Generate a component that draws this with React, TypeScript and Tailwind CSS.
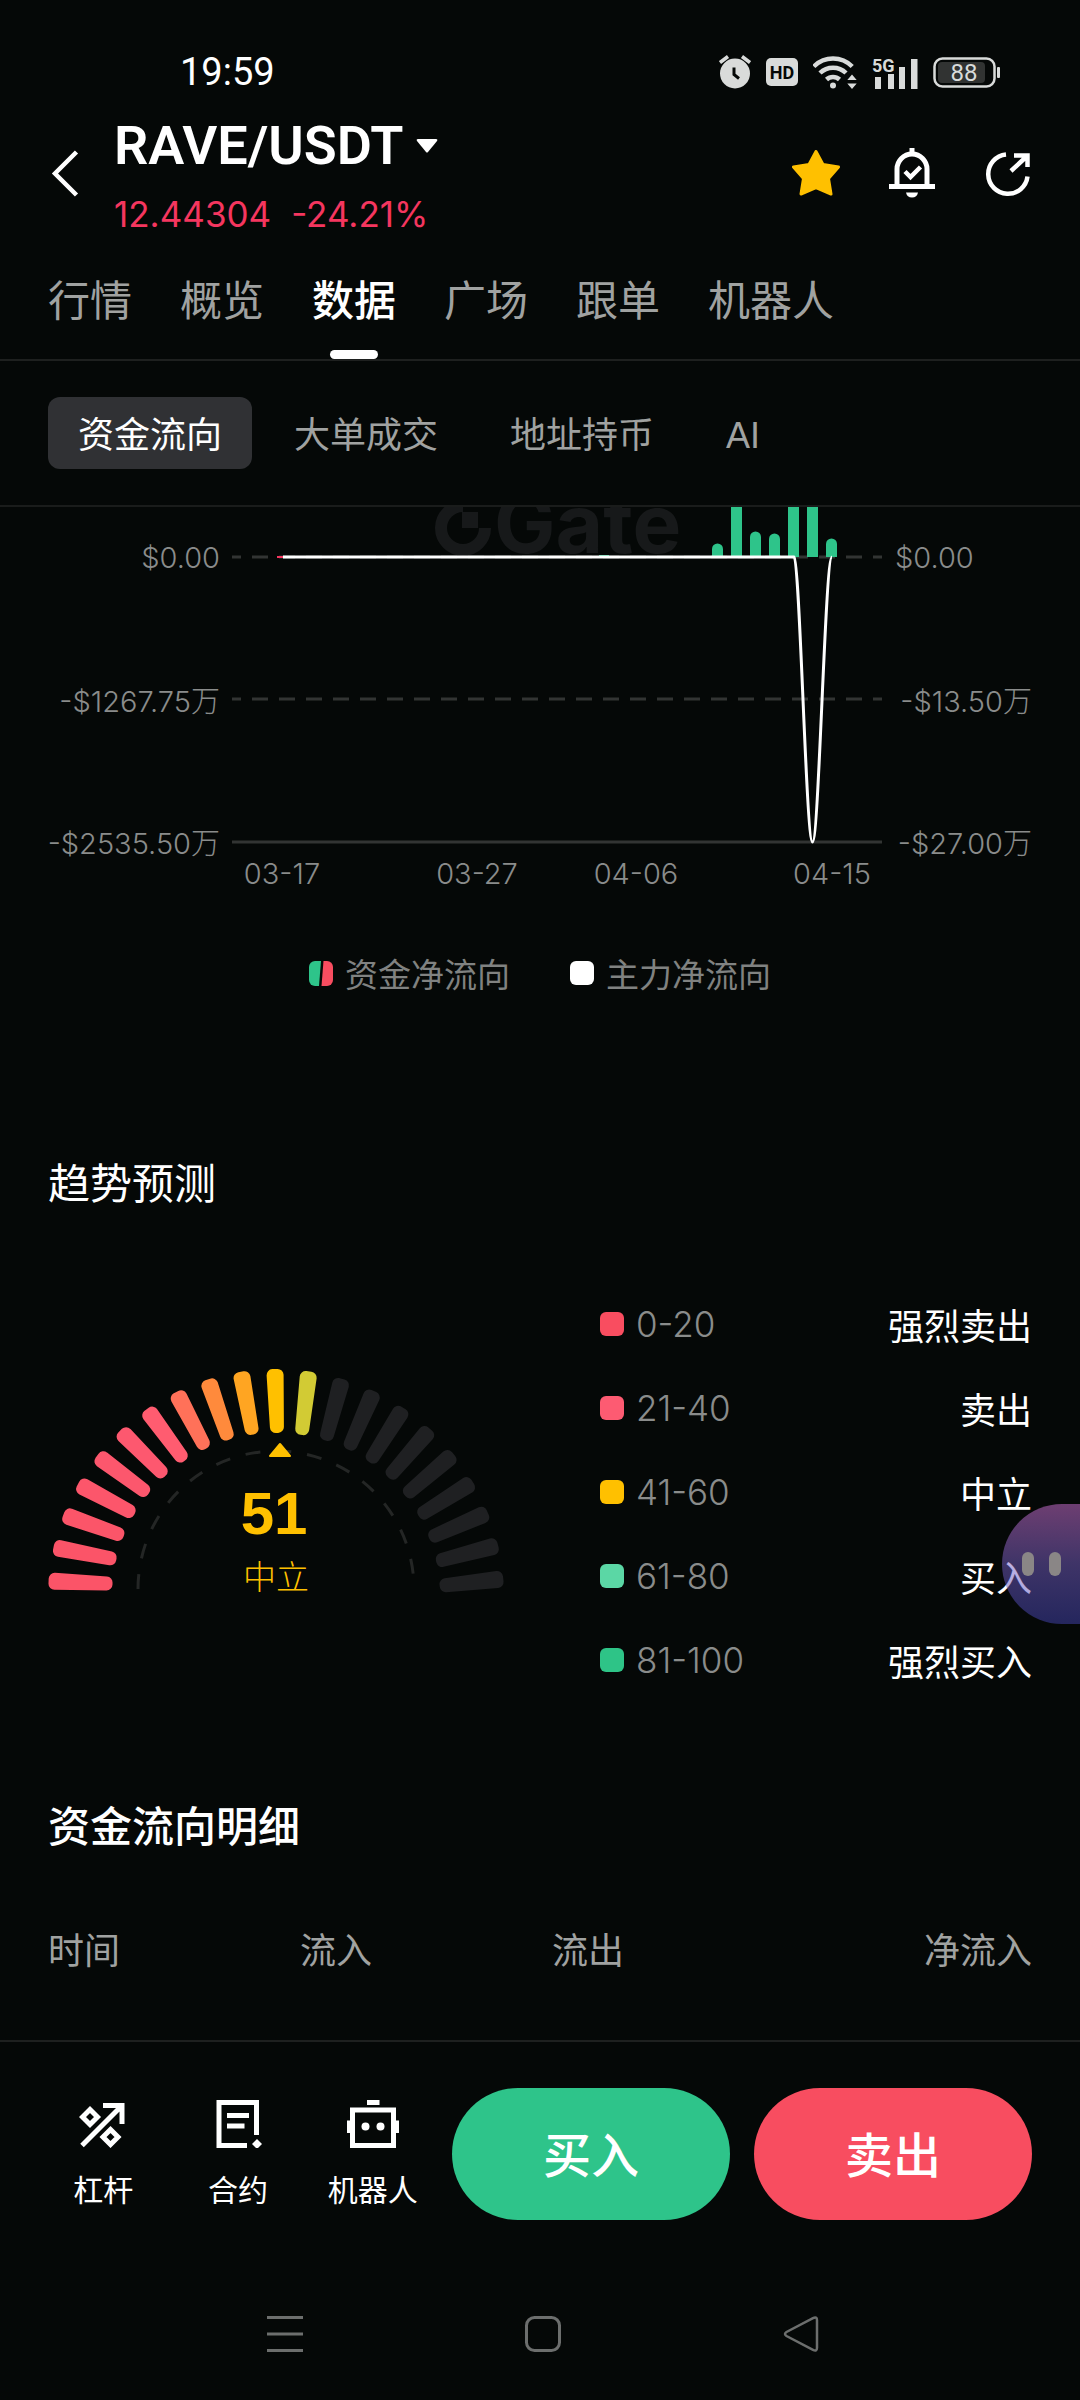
import { useState } from 'react'

const tabs = ['行情', '概览', '数据', '广场', '跟单', '机器人']
const subTabs = ['资金流向', '大单成交', '地址持币', 'AI']

const ranges = [
  { range: '0-20', label: '强烈卖出', color: 'bg-[#f94d60]' },
  { range: '21-40', label: '卖出', color: 'bg-[#fd5b72]' },
  { range: '41-60', label: '中立', color: 'bg-[#ffc000]' },
  { range: '61-80', label: '买入', color: 'bg-[#5bd7a5]' },
  { range: '81-100', label: '强烈买入', color: 'bg-[#2ec487]' },
]

// x, top of each net inflow bar; negative tops run past the visible area
const bars = [
  [664, 36], [683, -20], [702, 24], [721, 26], [740, -20], [759, -20], [778, 31],
]

const gaugeColors = [
  '#fb5468', '#fb5468', '#fb5569', '#fc566b', '#fc576d', '#fd586f', '#ff5c70',
  '#ff7159', '#ff8a3c', '#ffa522', '#ffc000', '#d2cb34',
]

function StatusBar() {
  return (
    <div className="flex h-24 items-center justify-between pt-12 pr-20 pl-45">
      <span className="font-[Roboto,sans-serif] text-[38px] leading-12">19:59</span>
      <div className="flex items-center gap-[15px] text-[#d9dbda]">
        {/* Alarm */}
        <svg width="32" height="34" viewBox="0 0 32 34">
          <circle cx="16" cy="18.5" r="15" fill="currentColor" />
          <path d="M1 7.5 9 1.5M31 7.5l-8-6" stroke="currentColor" strokeWidth="3.5" />
          <path d="M15 12.5v7l5 4" stroke="#050807" strokeWidth="3" fill="none" />
        </svg>
        {/* HD */}
        <svg width="32" height="28" viewBox="0 0 32 28">
          <rect width="32" height="28" rx="5" fill="currentColor" />
          <text x="16" y="21" textAnchor="middle" fill="#050807" className="font-[Roboto,sans-serif] text-[18px] font-bold">HD</text>
        </svg>
        {/* Wifi */}
        <svg width="44" height="34" viewBox="0 0 44 34">
          <g stroke="currentColor" strokeWidth="4.5" fill="none">
            <path d="M.8 11.5a27 27 0 0 1 38.4 0" />
            <path d="M7 18a18.5 18.5 0 0 1 26 0" />
            <path d="M13.5 24.5a9.5 9.5 0 0 1 13 0" />
          </g>
          <circle cx="20" cy="30.5" r="3" fill="currentColor" />
          <path d="m39 19.5 4.7 5.5h-9.4zM39 34l4.7-5.5h-9.4z" fill="currentColor" />
        </svg>
        {/* Signal */}
        <svg width="46" height="36" viewBox="0 -3 46 36" className="overflow-visible">
          <text x="0" y="15" fill="currentColor" className="font-[Roboto,sans-serif] text-[18px] leading-4 font-bold">5G</text>
          <path d="M3 20h6v12H3zM16 17h6v15h-6zM27 10h6v22h-6zM39 2h6.5v30H39z" fill="currentColor" />
        </svg>
        {/* Battery */}
        <svg width="67" height="31" viewBox="0 0 67 31">
          <rect x="1.5" y="1.5" width="60" height="28" rx="8" fill="none" stroke="currentColor" strokeWidth="2.5" />
          <rect x="5" y="5" width="47" height="21" rx="4" fill="#313332" />
          <rect x="64" y="10" width="3" height="11" rx="1" fill="currentColor" />
          <text x="31" y="24" textAnchor="middle" fill="currentColor" className="font-[Roboto,sans-serif] text-[24px]">88</text>
        </svg>
      </div>
    </div>
  )
}

function Header() {
  return (
    <header className="flex items-center justify-between px-12 pt-[18px]">
      <div className="flex items-center gap-[30px]">
        <button aria-label="返回">
          <svg width="36" height="48" viewBox="0 0 36 48" fill="none" stroke="currentColor" strokeWidth="4.5">
            <path d="M28.5 2 7 23.5 28.5 45" />
          </svg>
        </button>
        <div>
          <button className="flex items-center gap-3 leading-16">
            <h1 className="font-[Roboto,sans-serif] text-[54px] font-semibold">RAVE/USDT</h1>
            <svg width="22" height="16" viewBox="0 0 22 16" fill="currentColor">
              <path d="M2 1h18q2 0 1 2l-9 11q-1 1-2 0L1 3q-1-2 1-2z" />
            </svg>
          </button>
          <p className="mt-4 flex gap-5 font-[Inter,sans-serif] text-[35px] leading-10 text-[#f5365f]">
            <span>12.44304</span>
            <span>-24.21%</span>
          </p>
        </div>
      </div>
      <div className="flex gap-12">
        <button aria-label="收藏">
          <svg width="48" height="48" viewBox="0 0 48 48">
            <path d="M24 1.5 31 14.5l15.5 2.5-10 11.5L39 44l-15-6.5L9 44l2.5-15.5L1.5 17 17 14.5z" fill="#ffc000" stroke="#ffc000" strokeWidth="3" strokeLinejoin="round" />
          </svg>
        </button>
        <button aria-label="价格提醒">
          <svg width="48" height="48" viewBox="0 1 48 48" fill="none" stroke="currentColor" className="overflow-visible">
            <path d="M9 37V20a15 15 0 0 1 30 0v17" strokeWidth="5" />
            <path d="M1 37.5h46M24-1v6" strokeWidth="5" />
            <path d="m17 22.5 5.5 5.5 10-10" strokeWidth="4.5" />
            <path d="M18 43.5h12q-1 5-6 5t-6-5z" fill="currentColor" stroke="none" />
          </svg>
        </button>
        <button aria-label="分享">
          <svg width="48" height="48" viewBox="0 1 48 48" fill="none" stroke="currentColor">
            <path d="M43.5 27.5A19.7 19.7 0 1 1 22 5.5" strokeWidth="4.5" />
            <path d="M30 6.5h13.5V18M42 8 27 22" strokeWidth="4.5" />
          </svg>
        </button>
      </div>
    </header>
  )
}

function FlowChart() {
  return (
    <svg viewBox="0 0 984 384" className="block h-auto w-full overflow-hidden" role="img" aria-label="资金净流向">
      {/* Watermark */}
      <g fill="#17191a">
        <path d="M437 21a22 22 0 1 1-22-22" fill="none" stroke="#17191a" strokeWidth="12" />
        <rect x="414" y="5" width="16" height="16" />
        <text x="446" y="46" className="font-[Inter,sans-serif] text-[82px] font-bold">Gate</text>
      </g>

      {/* Grid */}
      <g stroke="#323433" strokeWidth="3">
        <path d="M184 50h650" strokeDasharray="16 11" strokeDashoffset="7" />
        <path d="M184 192h650" strokeDasharray="16 11" strokeDashoffset="7" />
        <path d="M184 335h650" />
      </g>

      {/* Bars */}
      <g fill="#2ec48a">
        <rect x="551" y="48" width="10" height="2" />
        {bars.map(([x, top]) => (
          <path key={x} d={`M${x} 50V${top + 6}a5.5 5.5 0 0 1 11 0V50z`} />
        ))}
      </g>

      {/* Main force line */}
      <path d="M229 50h8" stroke="#f5365f" strokeWidth="2" />
      <path d="M235 50H746C752 54 758 335 764.5 335S777 50 784 50" fill="none" stroke="#fff" strokeWidth="3" strokeLinejoin="round" />

      {/* Axis labels */}
      <g fill="#8a8c8b" className="font-[Inter,'Noto_Sans_CJK_SC',sans-serif] text-[29px] font-light">
        <g textAnchor="end">
          <text x="172" y="61">$0.00</text>
          <text x="172" y="205">-$1267.75万</text>
          <text x="172" y="347">-$2535.50万</text>
        </g>
        <text x="847" y="61">$0.00</text>
        <g textAnchor="end">
          <text x="984" y="205">-$13.50万</text>
          <text x="984" y="347">-$27.00万</text>
        </g>
        <g textAnchor="middle">
          <text x="234" y="377">03-17</text>
          <text x="429" y="377">03-27</text>
          <text x="588" y="377">04-06</text>
          <text x="784" y="377">04-15</text>
        </g>
      </g>
    </svg>
  )
}

function Gauge() {
  return (
    <svg viewBox="0 0 456 232" className="block h-auto w-full overflow-visible" role="img" aria-label="趋势 51 中立">
      {Array.from({ length: 21 }, (_, i) => {
        const deg = (i + 0.5) * (180 / 21)
        const rad = (deg * Math.PI) / 180
        const x = 228 - 196 * Math.cos(rad)
        const y = 232 - 196 * Math.sin(rad)
        const color = gaugeColors[i] ?? '#1f2022'
        return (
          <path
            key={i}
            d="M-2.5-26h5L1 26h-2z"
            transform={`translate(${x} ${y}) rotate(${deg - 92})`}
            fill={color}
            stroke={color}
            strokeWidth="12"
            strokeLinejoin="round"
          />
        )
      })}
      <path d="M90 224A138 138 0 0 1 366 224" fill="none" stroke="#242625" strokeWidth="3" strokeDasharray="15 16" />
      <path d="M232 79 242 91h-20z" fill="#ffc000" stroke="#ffc000" strokeWidth="2" strokeLinejoin="round" />
      <g fill="#ffc000" textAnchor="middle">
        <text x="226" y="169" className="font-['Liberation_Sans',sans-serif] text-[60px] font-bold">51</text>
        <text x="228" y="224" className="text-[33px] font-light">中立</text>
      </g>
    </svg>
  )
}

function ActionBar() {
  return (
    <div className="flex items-center gap-3 pr-12 pl-9">
      <div className="grid w-101 shrink-0 grid-cols-3 text-[30px] leading-10">
        <button className="flex flex-col items-center gap-5">
          <svg width="48" height="48" viewBox="0 0 48 48" fill="none" stroke="currentColor" strokeWidth="5">
            <path d="m11 9.5 7.5 7.5-7.5 7.5L3.5 17zM31.5 29.5 39 37l-7.5 7.5L24 37z" />
            <path d="M24 5.5h19V24M43 5.5l-40 40" />
          </svg>
          杠杆
        </button>
        <button className="flex flex-col items-center gap-5">
          <svg width="48" height="48" viewBox="0 0 48 48" fill="none" stroke="currentColor" strokeWidth="5">
            <path d="M33 45.5H5v-43h37.5V35M13 15.5h22M13 26h17.5" />
            <path d="m43 39 5 5-5 5-5-5z" fill="currentColor" stroke="none" />
          </svg>
          合约
        </button>
        <button className="flex flex-col items-center gap-5">
          <svg width="52" height="48" viewBox="-1 0 52 48" fill="none" stroke="currentColor" strokeWidth="5">
            <rect x="4.5" y="10" width="41" height="35.5" />
            <path d="M19 2.5h12.5M1 20.5V33M49 20.5V33" />
            <circle cx="17.5" cy="26.5" r="4" fill="currentColor" stroke="none" />
            <circle cx="32.5" cy="26.5" r="4" fill="currentColor" stroke="none" />
          </svg>
          机器人
        </button>
      </div>
      <div className="flex flex-1 gap-6 text-[48px] font-medium">
        <button className="h-33 flex-1 rounded-full bg-[#2ec48a] pb-1">买入</button>
        <button className="h-33 flex-1 rounded-full bg-[#f84d60] pb-1">卖出</button>
      </div>
    </div>
  )
}

export default function App() {
  const [tab, setTab] = useState('数据')
  const [sub, setSub] = useState('资金流向')

  return (
    <div className="relative flex min-h-screen flex-col bg-[#050807] font-['Noto_Sans_CJK_SC',sans-serif] text-white">
      <StatusBar />
      <Header />

      {/* Tabs */}
      <nav className="flex gap-12 border-b-2 border-[#1e201f] px-12 pt-9 text-[42px] leading-14">
        {tabs.map((t) => (
          <button
            key={t}
            onClick={() => setTab(t)}
            className={`flex flex-col items-center gap-6 ${t === tab ? 'font-medium text-white' : 'text-[#a0a2a1]'}`}
          >
            {t}
            <span className={`h-[9px] w-12 rounded-full ${t === tab ? 'bg-white' : ''}`} />
          </button>
        ))}
      </nav>
      <nav className="flex gap-3 border-b-2 border-[#1a1c1b] px-12 py-9 font-['Liberation_Sans','Noto_Sans_CJK_SC',sans-serif] text-[36px]">
        {subTabs.map((t) => (
          <button
            key={t}
            onClick={() => setSub(t)}
            className={`h-18 rounded-xl px-[30px] pt-1.5 ${t === sub ? 'bg-[#303134] text-white' : 'text-[#a0a2a1]'}`}
          >
            {t}
          </button>
        ))}
      </nav>

      <main className="flex-1 px-12">
        <FlowChart />
        <div className="mt-[62px] flex justify-center gap-15 text-[33px] leading-10 text-[#808281]">
          <span className="flex items-center gap-3">
            <svg width="24" height="25" viewBox="0 0 24 25">
              <path d="M6 0h6l-2 25H6a6 6 0 0 1-6-6V6a6 6 0 0 1 6-6z" fill="#2ec48a" />
              <path d="M14.5 0H18a6 6 0 0 1 6 6v13a6 6 0 0 1-6 6h-5.5z" fill="#f84d60" />
            </svg>
            资金净流向
          </span>
          <span className="flex items-center gap-3">
            <span className="size-6 rounded-md bg-white" />
            主力净流向
          </span>
        </div>

        {/* Trend */}
        <h2 className="mt-40 text-[42px] leading-14">趋势预测</h2>
        <section className="mt-[91px] grid grid-cols-[456fr_432fr] gap-24">
          <div className="pt-[65px]">
            <Gauge />
          </div>
          <ul className="flex flex-col gap-9 text-[36px] leading-12">
            {ranges.map((r) => (
              <li key={r.range} className="flex items-center">
                <span className={`mr-3 size-6 rounded-md ${r.color}`} />
                <span className="font-[Inter,sans-serif] text-[35px] font-light text-[#8a8c8b]">{r.range}</span>
                <span className="ml-auto">{r.label}</span>
              </li>
            ))}
          </ul>
        </section>

        {/* Details */}
        <h2 className="mt-28 text-[42px] leading-14 font-medium">资金流向明细</h2>
        <table className="mt-[72px] w-full table-fixed text-left text-[36px] leading-12 text-[#a0a2a1]">
          <thead>
            <tr>
              <th className="w-63 font-normal">时间</th>
              <th className="w-63 font-normal">流入</th>
              <th className="w-63 font-normal">流出</th>
              <th className="text-right font-normal">净流入</th>
            </tr>
          </thead>
        </table>
      </main>

      <footer className="border-t-2 border-[#1e201f] pt-[46px]">
        <ActionBar />
        {/* System keys */}
        <div className="flex justify-center gap-[222px] pt-24 pb-12 pl-1.5 text-[#6c6e6d]">
          <button aria-label="最近任务">
            <svg width="36" height="36" viewBox="0 0 36 36" stroke="currentColor" strokeWidth="3">
              <path d="M0 1.5h36M0 18h36M0 34.5h36" />
            </svg>
          </button>
          <button aria-label="主屏幕">
            <svg width="36" height="36" viewBox="0 0 36 36" fill="none" stroke="currentColor" strokeWidth="3">
              <rect x="1.5" y="1.5" width="33" height="33" rx="8" />
            </svg>
          </button>
          <button aria-label="返回上一页">
            <svg width="36" height="36" viewBox="0 0 36 36" fill="none" stroke="currentColor" strokeWidth="2.5">
              <path d="M30 2.2 3.5 16q-3 2 0 4L30 33.8q4 2 4-2V4.2q0-4-4-2z" />
            </svg>
          </button>
        </div>
      </footer>

      {/* Floating assistant */}
      <button
        aria-label="助手"
        className="absolute top-[1504px] right-0 flex h-30 w-[78px] items-center justify-center gap-[15px] rounded-l-full bg-linear-to-b from-[#d674dc]/50 via-[#7860c8]/50 to-[#4444b4]/50"
      >
        <span className="h-6 w-3 rounded-full bg-[#8a8686]" />
        <span className="h-6 w-3 rounded-full bg-[#8a8686]" />
      </button>
    </div>
  )
}
